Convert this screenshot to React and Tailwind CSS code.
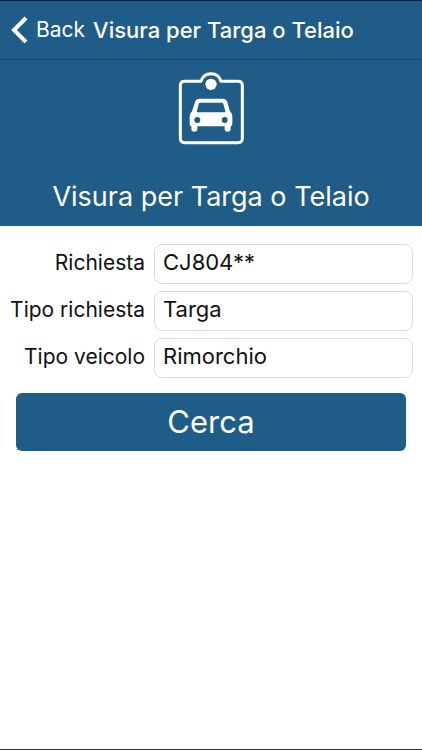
const CAMPI = [
  { id: 'richiesta', label: 'Richiesta', valore: 'CJ804**' },
  { id: 'tipo-richiesta', label: 'Tipo richiesta', valore: 'Targa' },
  { id: 'tipo-veicolo', label: 'Tipo veicolo', valore: 'Rimorchio' },
]

const TITOLO = 'Visura per Targa o Telaio'

function IconaTarga() {
  return (
    <svg viewBox="24 18 201 222" className="w-[67px] h-[74px]" fill="none" aria-hidden="true">
      <path
        d="M93 49H44Q31 49 31 62V220Q31 233 44 233H204Q217 233 217 220V62Q217 49 204 49H153C149 34 138 26 123 26S97 34 93 49Z"
        stroke="white"
        strokeWidth="9"
        strokeLinejoin="round"
      />
      <circle cx="123" cy="58" r="17" fill="white" />
      <path
        fillRule="evenodd"
        fill="white"
        d="M87 101H160Q168 101 171 109L180 139Q187 146 187 154V176Q187 183 182 184V192Q182 200 173 200T164 192V184H82V192Q82 200 73 200T64 192V184Q59 183 59 176V154Q59 146 66 139L76 109Q79 101 87 101ZM91 113Q87 113 86 117L80 142H167L160 117Q159 113 155 113ZM82 156A9 9 0 1 0 82 174A9 9 0 1 0 82 156ZM164 156A9 9 0 1 0 164 174A9 9 0 1 0 164 156Z"
      />
    </svg>
  )
}

function Campo({ id, label, valore }) {
  return (
    <div className="flex items-center gap-[9px]">
      <label htmlFor={id} className="w-[136px] shrink-0 pb-0.5 text-right text-[21px] leading-7 whitespace-nowrap">
        {label}
      </label>
      <input
        id={id}
        type="text"
        defaultValue={valore}
        className="min-w-0 flex-1 h-10 px-2 pb-1 rounded-lg border border-[#dcdcdc] bg-white text-[22px] outline-none"
      />
    </div>
  )
}

export default function App() {
  return (
    <div className="min-h-screen flex flex-col bg-white text-[#111111] border-y border-t-[#0a2038] border-b-[#3a3a3a] font-['Inter','Liberation_Sans',sans-serif]">
      <header className="h-[59px] shrink-0 flex items-center gap-2 pl-2 bg-[#1f5c87] border-b border-[#164a70] text-white whitespace-nowrap">
        <button type="button" className="flex items-center gap-2 text-[21px]">
          <svg viewBox="0 0 20 28" className="w-5 h-7" fill="none" aria-hidden="true">
            <path d="M18 2L6 14L18 26" stroke="white" strokeWidth="4" />
          </svg>
          Back
        </button>
        <h1 className="text-[22px] font-medium">{TITOLO}</h1>
      </header>
      <section className="flex flex-col items-center gap-[34px] py-[11px] bg-[#1f5c87] text-white">
        <IconaTarga />
        <h2 className="text-[27px] leading-9">{TITOLO}</h2>
      </section>
      <form className="flex flex-col gap-[7px] pt-[18px] px-[9px]" onSubmit={(e) => e.preventDefault()}>
        {CAMPI.map((c) => (
          <Campo key={c.id} {...c} />
        ))}
        <button type="submit" className="mt-2 mx-[7px] h-[58px] rounded-md bg-[#1f5c87] text-white text-[31px]">
          Cerca
        </button>
      </form>
    </div>
  )
}
